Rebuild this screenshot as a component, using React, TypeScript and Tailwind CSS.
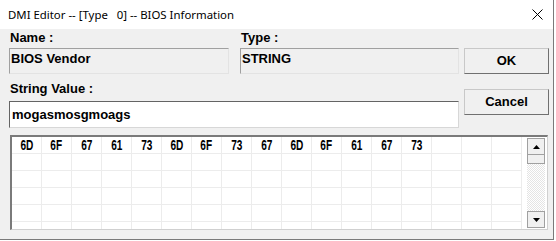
import React from 'react'

const hex = ['6D', '6F', '67', '61', '73', '6D', '6F', '73', '67', '6D', '6F', '61', '67', '73']
const font = { fontFamily: '"Liberation Sans", Arial, sans-serif' }

function Cell({ v }: { v?: string }) {
  return (
    <div className="w-[30px] h-[17px] shrink-0 border-r border-b border-[#ececec] flex items-center justify-center">
      {v && <span className="inline-block scale-x-[0.72] text-[14px] font-bold text-black leading-none">{v}</span>}
    </div>
  )
}

function Btn({ label }: { label: string }) {
  return (
    <div className="w-[85px] h-[26px] border border-t-[#c8c8c8] border-l-[#c8c8c8] border-r-[#707070] border-b-[#707070] bg-[#f0f0f0] flex items-center justify-center text-[13px] font-bold text-black">
      {label}
    </div>
  )
}

export default function App() {
  return (
    <div className="w-[556px] h-[241px] bg-white flex overflow-hidden" style={font}>
      <div className="w-[554px] h-[240px] border-r border-b border-[#7a7a7a] flex flex-col">
        {/* title bar */}
        <div className="h-[29px] bg-white flex items-center justify-between pl-[8px] pr-[10px] shrink-0">
          <span className="text-[11.4px] text-black whitespace-pre" style={{ fontFamily: '"Noto Sans", "Open Sans", sans-serif' }}>
            DMI Editor -- [Type   0] -- BIOS Information
          </span>
          <svg width="11" height="11" viewBox="0 0 11 11">
            <path d="M0.5 0.5 L10.5 10.5 M10.5 0.5 L0.5 10.5" stroke="#000" strokeWidth="1" />
          </svg>
        </div>

        {/* body */}
        <div className="flex-1 bg-[#f0f0f0] pl-[9px] pr-[5px]">
          <div className="flex">
            <div className="w-[450px] flex flex-col">
              <div className="flex gap-[11px]">
                <div className="w-[220px]">
                  <div className="mt-[2px] h-[14px] leading-[14px] pl-[1px] text-[13px] font-bold text-black">Name :</div>
                  <div className="mt-[3px] h-[26px] border border-t-[#a0a0a0] border-l-[#a0a0a0] border-r-[#e3e3e3] border-b-[#e3e3e3] pl-[1px] pt-[2px] text-[13px] font-bold leading-[15px] text-black">
                    BIOS Vendor
                  </div>
                </div>
                <div className="w-[219px]">
                  <div className="mt-[2px] h-[14px] leading-[14px] pl-[1px] text-[13px] font-bold text-black">Type :</div>
                  <div className="mt-[3px] h-[26px] border border-t-[#a0a0a0] border-l-[#a0a0a0] border-r-[#e3e3e3] border-b-[#e3e3e3] pl-[1px] pt-[2px] text-[13px] font-bold leading-[15px] text-black">
                    STRING
                  </div>
                </div>
              </div>
              <div className="mt-[8px] h-[14px] leading-[14px] pl-[1px] text-[13px] font-bold text-black">String Value :</div>
              <div className="mt-[5px] h-[27px] bg-white border border-t-[#646464] border-l-[#646464] border-r-[#d7d7d7] border-b-[#d7d7d7] pl-[2px] flex items-center text-[13px] font-bold text-black">
                mogasmosgmoags
              </div>
            </div>
            <div className="ml-[5px] flex flex-col gap-[15px] pt-[19px]">
              <Btn label="OK" />
              <Btn label="Cancel" />
            </div>
          </div>

          {/* hex grid */}
          <div className="mt-[7px] ml-[1px] w-[538px] h-[95px] bg-white border-t-2 border-l-2 border-t-[#7a7a7a] border-l-[#7a7a7a] border-r border-b border-r-[#d0d0d0] border-b-[#d0d0d0] flex">
            <div className="flex-1 overflow-hidden">
              {[0, 1, 2, 3, 4, 5].map(r => (
                <div key={r} className="flex">
                  {Array.from({ length: 17 }).map((_, c) => (
                    <Cell key={c} v={r === 0 ? hex[c] : undefined} />
                  ))}
                </div>
              ))}
            </div>
            <div className="w-[18px] mr-[2px] mt-[1px] flex flex-col">
              <div className="h-[17px] border border-[#a0a0a0] bg-[#f0f0f0] flex items-center justify-center">
                <svg width="7" height="4" viewBox="0 0 7 4"><path d="M3.5 0 L7 4 L0 4 Z" fill="#000" /></svg>
              </div>
              <div className="h-[9px] border border-t-0 border-[#a0a0a0] bg-[#f0f0f0]" />
              <div className="flex-1 bg-[repeating-conic-gradient(#e4e4e4_0_25%,#ffffff_0_50%)] bg-[length:2px_2px]" />
              <div className="h-[17px] mb-[1px] border border-[#a0a0a0] bg-[#f0f0f0] flex items-center justify-center">
                <svg width="7" height="4" viewBox="0 0 7 4"><path d="M0 0 L7 0 L3.5 4 Z" fill="#000" /></svg>
              </div>
            </div>
          </div>
        </div>
      </div>
    </div>
  )
}
